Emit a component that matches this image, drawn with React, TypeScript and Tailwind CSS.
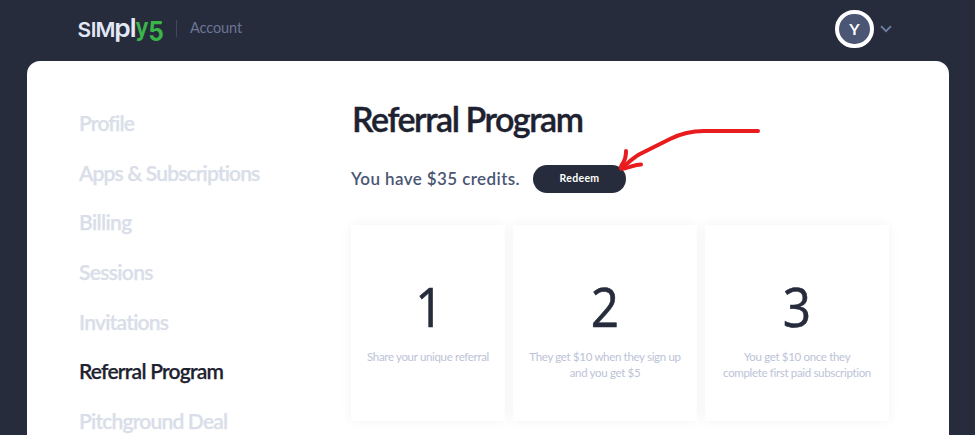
import React from "react";

const navItems = [
  { label: "Profile", style: "tracking-[-0.8px]" },
  { label: "Apps & Subscriptions", style: "tracking-[-0.85px]" },
  { label: "Billing", style: "tracking-[-0.6px]" },
  { label: "Sessions", style: "tracking-[-0.65px]" },
  { label: "Invitations", style: "tracking-[-0.75px]" },
  { label: "Referral Program", style: "tracking-[-0.78px]", active: true },
  { label: "Pitchground Deal", style: "tracking-[-0.8px]" },
];

const steps = [
  { n: "1", width: "w-[154px]", shift: "pl-[3px]", lines: ["Share your unique referral"] },
  { n: "2", width: "w-[184px]", shift: "", lines: ["They get $10 when they sign up", "and you get $5"] },
  { n: "3", width: "w-[184px]", shift: "", lines: ["You get $10 once they", "complete first paid subscription"] },
];

function Logo() {
  return (
    <svg width="86" height="38" viewBox="0 0 86 38" className="block overflow-visible font-['Inter',sans-serif] font-semibold" aria-label="simply5">
      <g fill="#e2e8f6">
        <text x="-0.6" y="27" fontSize="20.5" textLength="13.6" lengthAdjust="spacingAndGlyphs">S</text>
        <text x="12.7" y="27" fontSize="20.5">I</text>
        <text x="17.6" y="27" fontSize="20.5" textLength="20" lengthAdjust="spacingAndGlyphs">M</text>
        <text x="36.3" y="26.500" fontSize="25" textLength="16.5" lengthAdjust="spacingAndGlyphs">p</text>
        <text x="51.7" y="27" fontSize="26">l</text>
      </g>
      <g fill="#39b54a" className="font-bold">
        <text x="57.4" y="26.300" fontSize="25.5" textLength="13" lengthAdjust="spacingAndGlyphs">y</text>
        <text x="70.2" y="31" fontSize="26.500" textLength="15.6" lengthAdjust="spacingAndGlyphs">5</text>
      </g>
    </svg>
  );
}

function Header() {
  return (
    <header className="flex h-[61px] items-start justify-between pl-[78px] pr-[83px]">
      <div className="flex items-start pt-[10px]">
        <Logo />
        <div className="ml-3 mt-[10px] h-[17px] w-px bg-[#41485c]" />
        <span className="ml-[13px] mt-[8px] text-[14.5px] leading-5 tracking-[-0.1px] text-[#6b7595]">Account</span>
      </div>
      <div className="flex items-center pt-[10px]">
        <div className="flex h-[38px] w-[39px] items-center justify-center rounded-full border-4 border-white bg-[#4a5673] pb-px text-[16px] font-bold text-white">
          Y
        </div>
        <svg width="12" height="8" viewBox="0 0 12 8" className="ml-[6px]" fill="none" stroke="#7080a6" strokeWidth="1.8">
          <path d="M1 1.2 6 6.2 11 1.2" />
        </svg>
      </div>
    </header>
  );
}

export default function App() {
  return (
    <div className="relative h-[435px] w-[975px] overflow-hidden bg-[#262c3b] font-['Lato',sans-serif]">
      <Header />
      <main className="mr-[26px] ml-[27px] flex h-[374px] rounded-t-[13px] bg-white">
        <nav className="ml-[52px] w-[272px] shrink-0 pt-[37px]">
          {navItems.map((item) => (
            <a
              key={item.label}
              className={`block h-[49.67px] whitespace-nowrap text-[21px] leading-[49.67px] font-semibold [-webkit-text-stroke:0.25px_currentColor] ${item.style} ${item.active ? "text-[#1e2230]" : "text-[#d9dee9]"}`}
            >
              {item.label}
            </a>
          ))}
        </nav>
        <section className="w-[538px] pt-[38px]">
          <h1 className="ml-px text-[34px] leading-10 font-semibold tracking-[-1.45px] whitespace-nowrap text-[#1e2230] [-webkit-text-stroke:0.4px_currentColor]">Referral Program</h1>
          <div className="mt-[26px] flex h-7 items-center">
            <p className="w-[182px] text-[17px] font-semibold tracking-[0.4px] whitespace-nowrap text-[#4a5673]">You have $35 credits.</p>
            <button className="h-7 w-[93px] rounded-full bg-[#262c3b] text-[10.5px] font-bold tracking-[0.3px] text-white">Redeem</button>
          </div>
          <div className="mt-8 flex gap-2">
            {steps.map((step) => (
              <div key={step.n} className={`${step.width} h-[196px] shrink-0 pt-[51px] text-center shadow-[0_0_12px_rgba(38,44,59,0.05)]`}>
                <div className={`${step.shift} scale-x-90 font-['Open_Sans',sans-serif] text-[55px] leading-[60px] font-medium text-[#262c3b] [-webkit-text-stroke:0.6px_currentColor]`}>{step.n}</div>
                <p className="mt-[13px] text-[11.5px] leading-4 tracking-[-0.33px] text-[#bcc3d7]">
                  {step.lines.map((line) => (
                    <span key={line} className="block whitespace-nowrap">{line}</span>
                  ))}
                </p>
              </div>
            ))}
          </div>
        </section>
      </main>
      <svg className="pointer-events-none absolute top-[120px] left-[610px]" width="160" height="60" viewBox="610 120 160 60" fill="none" stroke="#e81b1e" strokeWidth="4" strokeLinecap="round" strokeLinejoin="round">
        <path d="M758 131H704C690 131 680 134 670 139L639 154.500C633 158 628 163 621 168.500" />
        <path d="M626 151C626 161 624 160 621 166.500Q620.500 169 624 168.500C631 167.500 634 164.500 641 164.500" />
      </svg>
    </div>
  );
}
